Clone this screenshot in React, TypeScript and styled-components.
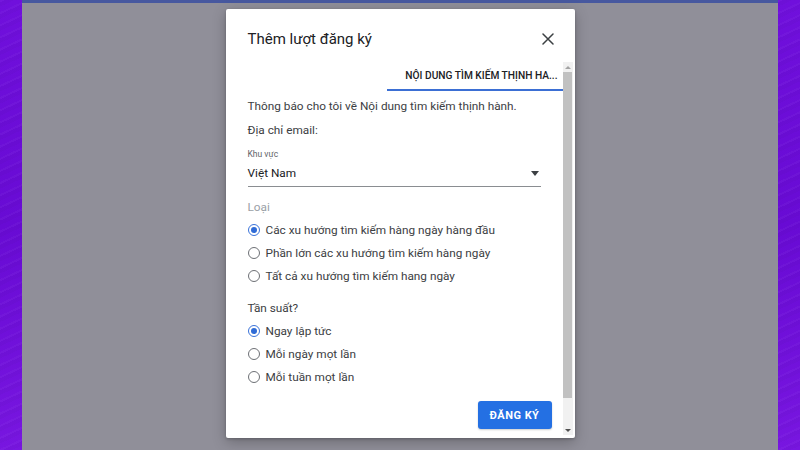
import React from "react"
import styled, { createGlobalStyle } from "styled-components"

const GlobalStyle = createGlobalStyle`
  html, body {
    margin: 0;
    padding: 0;
    height: 100%;
  }
  body {
    font-family: Roboto, "Liberation Sans", Arial, sans-serif;
    overflow: hidden;
  }
`

const Screen = styled.div`
  display: flex;
  width: 800px;
  height: 450px;
`

const Wallpaper = styled.div`
  width: 22px;
  flex-shrink: 0;
  background:
    repeating-linear-gradient(
      155deg,
      rgba(255, 255, 255, 0.03) 0 2px,
      rgba(0, 0, 0, 0.025) 2px 6px,
      transparent 6px 11px
    ),
    linear-gradient(180deg, #7010dc 0%, #680bd4 50%, #7816e0 100%);
`

const Backdrop = styled.div`
  flex: 1;
  display: flex;
  flex-direction: column;
  align-items: center;
  background: #908f99;
  border-top: 3px solid #47589f;
`

const Dialog = styled.div`
  margin-top: 6px;
  width: 349px;
  height: 429px;
  display: flex;
  flex-direction: column;
  background: #fff;
  border-radius: 2px;
  box-shadow: 0 4px 14px rgba(0, 0, 0, 0.25), 0 1px 3px rgba(0, 0, 0, 0.2);
  box-sizing: border-box;
  padding: 0 2px 3px 0;
`

const Header = styled.div`
  height: 53px;
  flex-shrink: 0;
  display: flex;
  align-items: center;
  justify-content: space-between;
  padding: 0 17px 0 22px;
  box-sizing: border-box;
`

const Title = styled.h2`
  margin: 0;
  font-size: 15px;
  font-weight: 400;
  color: #202124;
  padding-top: 7px;
`

const CloseButton = styled.button`
  border: 0;
  background: none;
  padding: 0;
  width: 16px;
  height: 16px;
  margin-top: 7px;
  display: flex;
  align-items: center;
  justify-content: center;
  cursor: pointer;
`

const Body = styled.div`
  flex: 1;
  display: flex;
  min-height: 0;
`

const Content = styled.div`
  flex: 1;
  display: flex;
  flex-direction: column;
  padding-left: 22px;
  color: #3c4043;
  font-size: 11.8px;
  white-space: nowrap;
`

const TabRow = styled.div`
  display: flex;
  justify-content: flex-end;
`

const Tab = styled.div`
  width: 176px;
  box-sizing: border-box;
  padding-right: 5px;
  text-align: right;
  font-size: 10.2px;
  font-weight: 500;
  color: #202124;
  line-height: 27px;
  border-bottom: 2px solid #3b6fd4;
`

const Line = styled.div<{ $gap?: number; $muted?: boolean }>`
  line-height: 18px;
  margin-top: ${p => p.$gap ?? 0}px;
  margin-right: 22px;
  color: ${p => (p.$muted ? "#9aa0a6" : "#3c4043")};
`

const FieldLabel = styled.div`
  margin-top: 9px;
  font-size: 8.5px;
  line-height: 12px;
  color: #5f6368;
`

const Select = styled.div`
  margin: 4px 22px 0 0;
  display: flex;
  align-items: center;
  justify-content: space-between;
  line-height: 18px;
  padding-bottom: 4px;
  border-bottom: 1px solid #8a8d91;
  color: #202124;
`

const Caret = styled.span`
  width: 0;
  height: 0;
  margin-right: 2px;
  border-left: 4.5px solid transparent;
  border-right: 4.5px solid transparent;
  border-top: 5px solid #3c4043;
`

const RadioGroup = styled.div<{ $gap: number }>`
  display: flex;
  flex-direction: column;
  margin-top: ${p => p.$gap}px;
`

const RadioRow = styled.label`
  display: flex;
  align-items: center;
  height: 23px;
  gap: 6px;
  color: #3c4043;
`

const RadioMark = styled.span<{ $on: boolean }>`
  width: 12px;
  height: 12px;
  box-sizing: border-box;
  border-radius: 50%;
  border: 1.3px solid ${p => (p.$on ? "#3b73d9" : "#6d7075")};
  display: flex;
  align-items: center;
  justify-content: center;

  &::after {
    content: "";
    width: 6px;
    height: 6px;
    border-radius: 50%;
    background: ${p => (p.$on ? "#2f6bd6" : "transparent")};
  }
`

const Actions = styled.div`
  display: flex;
  justify-content: flex-end;
  margin: 13px 11px 0 0;
`

const PrimaryButton = styled.button`
  height: 28px;
  width: 74px;
  border: 0;
  border-radius: 3px;
  background: #2470e3;
  color: #fff;
  font-family: inherit;
  font-size: 11px;
  font-weight: 700;
  letter-spacing: 0.5px;
  box-shadow: 0 1px 2px rgba(0, 0, 0, 0.2);
`

const Scrollbar = styled.div`
  width: 10px;
  flex-shrink: 0;
  display: flex;
  flex-direction: column;
  align-items: center;
  background: #f1f1f1;
`

const Arrow = styled.span<{ $down?: boolean }>`
  height: 10px;
  display: flex;
  align-items: center;
  justify-content: center;

  &::before {
    content: "";
    border-left: 3px solid transparent;
    border-right: 3px solid transparent;
    ${p =>
      p.$down
        ? "border-top: 3px solid #505050;"
        : "border-bottom: 3px solid #a3a3a3;"}
  }
`

const Thumb = styled.div`
  width: 9px;
  height: 326px;
  background: #c1c1c1;
`

const ScrollGap = styled.div`
  flex: 1;
`

type Option = { label: string; checked?: boolean }

const kinds: Option[] = [
  { label: "Các xu hướng tìm kiếm hàng ngày hàng đầu", checked: true },
  { label: "Phần lớn các xu hướng tìm kiếm hàng ngày" },
  { label: "Tất cả xu hướng tìm kiếm hang ngày" },
]

const frequencies: Option[] = [
  { label: "Ngay lập tức", checked: true },
  { label: "Mỗi ngày mọt lần" },
  { label: "Mỗi tuần mọt lần" },
]

const Radios = ({ options, gap }: { options: Option[]; gap: number }) => (
  <RadioGroup $gap={gap}>
    {options.map(o => (
      <RadioRow key={o.label}>
        <RadioMark $on={!!o.checked} />
        {o.label}
      </RadioRow>
    ))}
  </RadioGroup>
)

export default function App() {
  return (
    <>
      <GlobalStyle />
      <Screen>
        <Wallpaper />
        <Backdrop>
          <Dialog>
            <Header>
              <Title>Thêm lượt đăng ký</Title>
              <CloseButton aria-label="Đóng">
                <svg width="12" height="12" viewBox="0 0 12 12">
                  <path
                    d="M1 1 L11 11 M11 1 L1 11"
                    stroke="#3c4043"
                    strokeWidth="1.5"
                    strokeLinecap="round"
                  />
                </svg>
              </CloseButton>
            </Header>
            <Body>
              <Content>
                <TabRow>
                  <Tab>NỘI DUNG TÌM KIẾM THỊNH HA...</Tab>
                </TabRow>
                <Line $gap={6}>Thông báo cho tôi về Nội dung tìm kiếm thịnh hành.</Line>
                <Line $gap={6}>Địa chỉ email:</Line>
                <FieldLabel>Khu vực</FieldLabel>
                <Select>
                  Việt Nam
                  <Caret />
                </Select>
                <Line $gap={11} $muted>
                  Loại
                </Line>
                <Radios options={kinds} gap={2} />
                <Line $gap={12}>Tần suất?</Line>
                <Radios options={frequencies} gap={2} />
                <Actions>
                  <PrimaryButton>ĐĂNG KÝ</PrimaryButton>
                </Actions>
              </Content>
              <Scrollbar>
                <Arrow />
                <Thumb />
                <ScrollGap />
                <Arrow $down />
              </Scrollbar>
            </Body>
          </Dialog>
        </Backdrop>
        <Wallpaper />
      </Screen>
    </>
  )
}
